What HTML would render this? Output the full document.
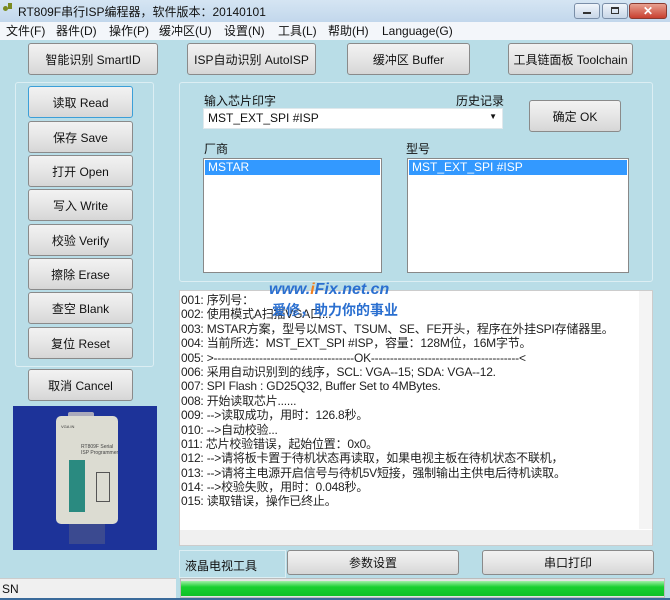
<!DOCTYPE html>
<html><head><meta charset="utf-8"><style>
*{margin:0;padding:0;box-sizing:border-box}
body{width:670px;height:600px;position:relative;overflow:hidden;background:#b9dde7;font-family:"Liberation Sans","Noto Sans CJK SC",sans-serif;font-size:12px;color:#111}
.a{position:absolute}
.btn{position:absolute;background:linear-gradient(#f2f2f2,#e6e6e6 50%,#d6d6d6);border:1px solid #8a8a8a;border-radius:3px;display:flex;align-items:center;justify-content:center;font-size:12px;color:#111}
.grp{position:absolute;border:1px solid #dceef3;border-radius:3px}
.list{position:absolute;background:#fff;border:1px solid #888}
.sel{background:#3399ff;color:#fff;height:15px;line-height:15px;padding-left:3px;font-size:12px}
.log div{height:14.4px;line-height:14.4px;white-space:nowrap;letter-spacing:-0.2px}
.m{position:absolute;top:23px;font-size:12px;line-height:16px;white-space:nowrap}
</style></head><body>
<div class="a" style="left:0;top:0;width:670px;height:22px;background:linear-gradient(#d5e5f3,#c2d7ec)"></div>
<div class="a" style="left:3px;top:6px;width:5px;height:5px;background:#7a8a20;border-radius:50%"></div>
<div class="a" style="left:8px;top:3px;width:4px;height:6px;background:#7a8a20"></div>
<div class="a" style="left:18px;top:4px;font-size:12px;line-height:16px">RT809F串行ISP编程器，软件版本：20140101</div>
<div class="a" style="left:574px;top:3px;width:26px;height:16px;border:1px solid #7a8ea8;border-radius:3px;background:linear-gradient(#f0f5fb,#c8d6e8)"></div>
<div class="a" style="left:583px;top:12px;width:8px;height:2px;background:#333"></div>
<div class="a" style="left:602px;top:3px;width:26px;height:16px;border:1px solid #7a8ea8;border-radius:3px;background:linear-gradient(#f0f5fb,#c8d6e8)"></div>
<div class="a" style="left:611px;top:7px;width:8px;height:7px;border:1px solid #333;border-top-width:2px"></div>
<div class="a" style="left:629px;top:3px;width:38px;height:16px;border:1px solid #8a3a30;border-radius:3px;background:linear-gradient(#e8a090,#c84030);color:#fff;font-weight:bold;text-align:center;line-height:14px;font-size:12px">✕</div>
<div class="a" style="left:0;top:22px;width:670px;height:18px;background:#f3f6fa"></div>
<span class="m" style="left:6px">文件(F)</span>
<span class="m" style="left:56px">器件(D)</span>
<span class="m" style="left:109px">操作(P)</span>
<span class="m" style="left:159px">缓冲区(U)</span>
<span class="m" style="left:224px">设置(N)</span>
<span class="m" style="left:278px">工具(L)</span>
<span class="m" style="left:328px">帮助(H)</span>
<span class="m" style="left:382px">Language(G)</span>

<div class="btn" style="left:28px;top:43px;width:130px;height:32px">智能识别 SmartID</div>
<div class="btn" style="left:187px;top:43px;width:129px;height:32px">ISP自动识别 AutoISP</div>
<div class="btn" style="left:347px;top:43px;width:123px;height:32px">缓冲区 Buffer</div>
<div class="btn" style="left:508px;top:43px;width:125px;height:32px">工具链面板 Toolchain</div>

<div class="grp" style="left:15px;top:82px;width:139px;height:285px"></div>
<div class="btn" style="left:28px;top:86px;width:105px;height:32px;border-color:#3c9fd8">读取 Read</div>
<div class="btn" style="left:28px;top:121px;width:105px;height:32px">保存 Save</div>
<div class="btn" style="left:28px;top:155px;width:105px;height:32px">打开 Open</div>
<div class="btn" style="left:28px;top:189px;width:105px;height:32px">写入 Write</div>
<div class="btn" style="left:28px;top:224px;width:105px;height:32px">校验 Verify</div>
<div class="btn" style="left:28px;top:258px;width:105px;height:32px">擦除 Erase</div>
<div class="btn" style="left:28px;top:292px;width:105px;height:32px">查空 Blank</div>
<div class="btn" style="left:28px;top:327px;width:105px;height:32px">复位 Reset</div>
<div class="btn" style="left:28px;top:369px;width:105px;height:32px">取消 Cancel</div>

<div class="a" style="left:13px;top:406px;width:144px;height:144px;background:#1d3399;overflow:hidden">
 <div class="a" style="left:55px;top:6px;width:26px;height:10px;background:#aab;border-radius:2px"></div>
 <div class="a" style="left:43px;top:10px;width:62px;height:108px;background:#dcdcd2;border-radius:5px"></div>
 <div class="a" style="left:56px;top:54px;width:16px;height:52px;background:#2a8a80"></div>
 <div class="a" style="left:83px;top:66px;width:14px;height:30px;border:1px solid #555"></div>
 <div class="a" style="left:56px;top:118px;width:36px;height:20px;background:#3b4a90"></div>
 <div class="a" style="left:48px;top:18px;font-size:4px;color:#333">VGA IN</div>
 <div class="a" style="left:68px;top:38px;font-size:5px;color:#444">RT809F Serial<br>ISP Programmer</div>
</div>

<div class="grp" style="left:179px;top:82px;width:474px;height:200px"></div>
<div class="a" style="left:204px;top:92px">输入芯片印字</div>
<div class="a" style="left:456px;top:92px">历史记录</div>
<div class="a" style="left:203px;top:108px;width:300px;height:21px;background:#fff;border:1px solid #e0e8ec;padding:2px 4px;font-size:12px">MST_EXT_SPI #ISP<span class="a" style="right:5px;top:3px;font-size:8px">▼</span></div>
<div class="btn" style="left:529px;top:100px;width:92px;height:32px">确定 OK</div>
<div class="a" style="left:204px;top:140px">厂商</div>
<div class="a" style="left:406px;top:140px">型号</div>
<div class="list" style="left:203px;top:158px;width:179px;height:115px;padding:1px"><div class="sel">MSTAR</div></div>
<div class="list" style="left:407px;top:158px;width:222px;height:115px;padding:1px"><div class="sel">MST_EXT_SPI #ISP</div></div>

<div class="a" style="left:179px;top:290px;width:474px;height:256px;background:#fff;border:1px solid #ccc"></div>
<div class="a" style="left:639px;top:291px;width:13px;height:238px;background:#f4f4f4"></div>
<div class="a" style="left:180px;top:530px;width:472px;height:15px;background:#f0f0f0"></div>
<div class="a log" style="left:181px;top:293px;font-size:12px;color:#222">
<div>001: 序列号：</div>
<div>002: 使用模式A扫描VGA口...</div>
<div>003: MSTAR方案，型号以MST、TSUM、SE、FE开头，程序在外挂SPI存储器里。</div>
<div>004: 当前所选：MST_EXT_SPI #ISP，容量：128M位，16M字节。</div>
<div>005: &gt;-------------------------------------OK---------------------------------------&lt;</div>
<div>006: 采用自动识别到的线序，SCL: VGA--15; SDA: VGA--12.</div>
<div>007: SPI Flash : GD25Q32, Buffer Set to 4MBytes.</div>
<div>008: 开始读取芯片......</div>
<div>009: --&gt;读取成功，用时：126.8秒。</div>
<div>010: --&gt;自动校验...</div>
<div>011: 芯片校验错误，起始位置：0x0。</div>
<div>012: --&gt;请将板卡置于待机状态再读取，如果电视主板在待机状态不联机，</div>
<div>013: --&gt;请将主电源开启信号与待机5V短接，强制输出主供电后待机读取。</div>
<div>014: --&gt;校验失败，用时：0.048秒。</div>
<div>015: 读取错误，操作已终止。</div>
</div>
<div class="a" style="left:269px;top:281px;color:#2a6fd0;font-size:16px;font-style:italic;font-weight:bold">www.<span style="color:#f08020">i</span>Fix.net.cn</div>
<div class="a" style="left:272px;top:300px;color:#2a6fd0;font-size:14px;font-weight:bold">爱修，助力你的事业</div>

<div class="a" style="left:179px;top:550px;width:107px;height:28px;border:1px solid #dceef3;padding:6px 5px;font-size:12px">液晶电视工具</div>
<div class="btn" style="left:287px;top:550px;width:172px;height:25px">参数设置</div>
<div class="btn" style="left:482px;top:550px;width:172px;height:25px">串口打印</div>

<div class="a" style="left:0;top:578px;width:176px;height:20px;background:#f0f0f0;border-top:1px solid #ccc;padding:3px 2px">SN</div>
<div class="a" style="left:180px;top:578px;width:485px;height:20px;background:#e4e4e4;border:1px solid #bbb"></div>
<div class="a" style="left:181px;top:581px;width:483px;height:15px;background:linear-gradient(#a0f0a8,#18d030 40%,#10c028)"></div>
<div class="a" style="left:0;top:598px;width:670px;height:2px;background:#3a6a9a"></div>
</body></html>
